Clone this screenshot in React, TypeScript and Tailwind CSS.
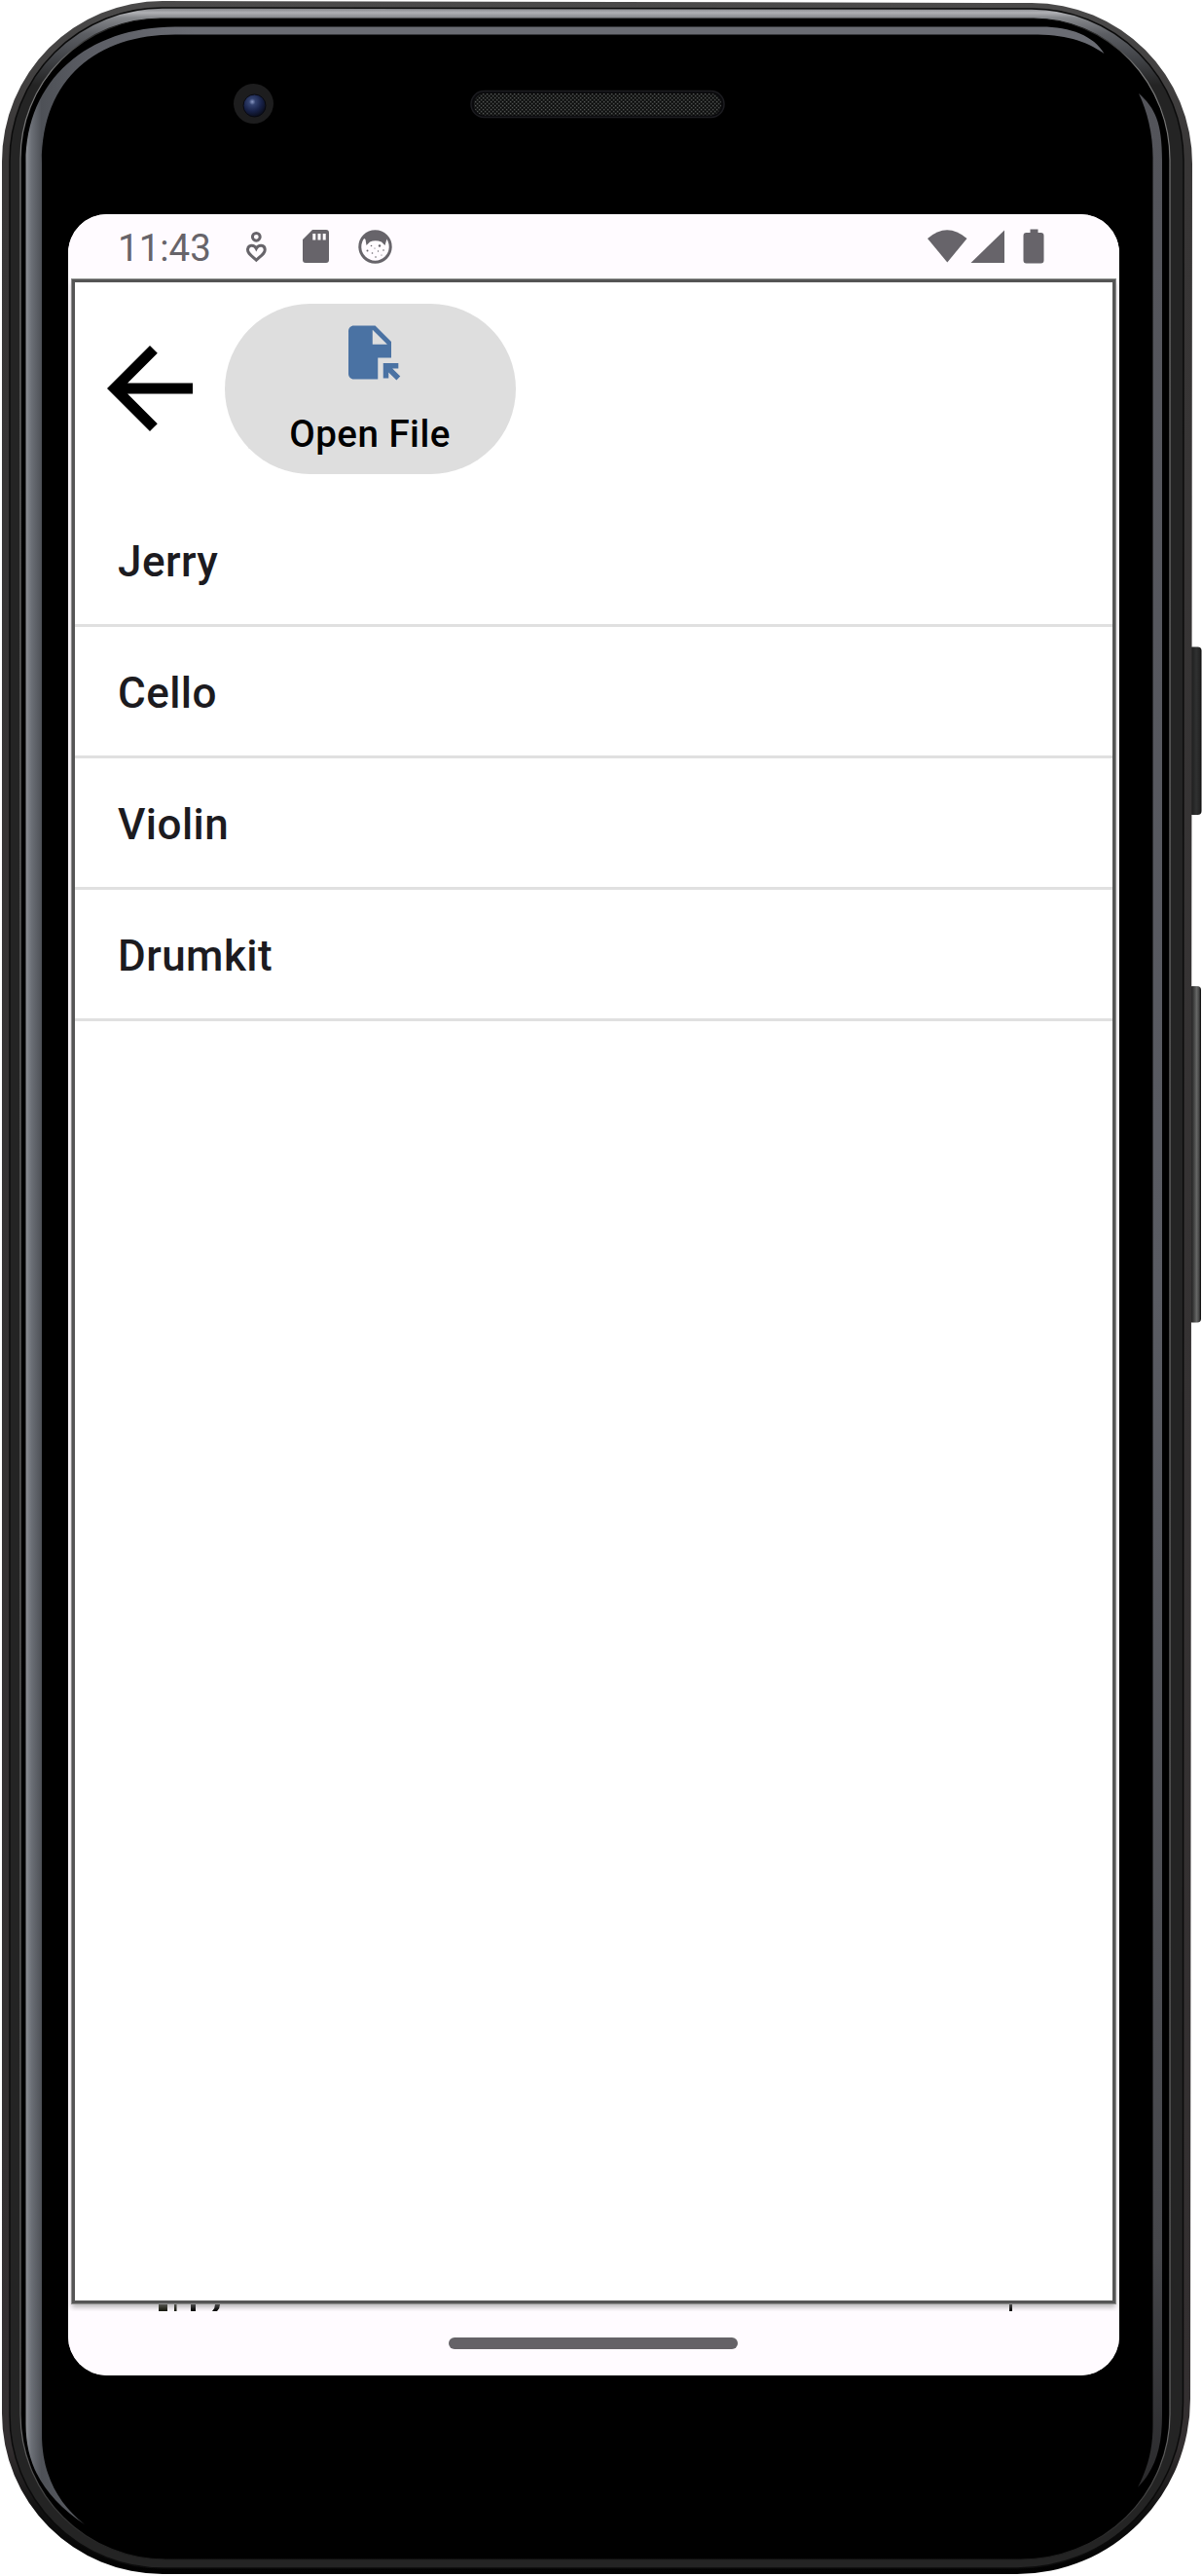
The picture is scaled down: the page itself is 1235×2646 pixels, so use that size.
const instruments = ["Jerry", "Cello", "Violin", "Drumkit"];

function Chassis() {
  return (
    <svg
      className="absolute inset-0 h-[2646px] w-[1235px]"
      viewBox="0 0 1235 2646"
      aria-hidden="true"
    >
      <defs>
        <linearGradient id="edge" gradientUnits="userSpaceOnUse" x1="0" y1="0" x2="0" y2="2646">
          <stop offset="0" stopColor="#4b4a4a" />
          <stop offset="0.06" stopColor="#383636" />
          <stop offset="0.95" stopColor="#332f30" />
          <stop offset="0.975" stopColor="#101010" />
          <stop offset="1" stopColor="#000" />
        </linearGradient>
        <linearGradient id="shine" gradientUnits="userSpaceOnUse" x1="0" y1="9" x2="0" y2="140">
          <stop offset="0" stopColor="#85868a" />
          <stop offset="0.03" stopColor="#b0b1b5" />
          <stop offset="0.07" stopColor="#85878b" />
          <stop offset="0.2" stopColor="#5c5e63" />
          <stop offset="0.4" stopColor="#404246" />
          <stop offset="0.6" stopColor="#242424" />
          <stop offset="1" stopColor="#242424" />
        </linearGradient>
        <linearGradient id="line" gradientUnits="userSpaceOnUse" x1="0" y1="20" x2="0" y2="2630">
          <stop offset="0" stopColor="#111" />
          <stop offset="0.02" stopColor="#777" />
          <stop offset="0.95" stopColor="#666" />
          <stop offset="1" stopColor="#1c1c1c" />
        </linearGradient>
        <linearGradient id="rim" gradientUnits="userSpaceOnUse" x1="26" y1="0" x2="200" y2="0">
          <stop offset="0" stopColor="#909398" />
          <stop offset="0.035" stopColor="#6c7077" />
          <stop offset="0.095" stopColor="#4e5157" />
          <stop offset="0.4" stopColor="#5c5e65" />
          <stop offset="1" stopColor="#6a6c73" />
        </linearGradient>
        <linearGradient id="rimRight" gradientUnits="userSpaceOnUse" x1="0" y1="96" x2="0" y2="2555">
          <stop offset="0" stopColor="#53545a" />
          <stop offset="0.5" stopColor="#5a5c63" />
          <stop offset="0.9" stopColor="#46474b" />
          <stop offset="1" stopColor="#2a2a2c" />
        </linearGradient>
        <linearGradient id="key" x1="0" x2="1" y1="0" y2="0">
          <stop offset="0" stopColor="#111" />
          <stop offset="0.6" stopColor="#303131" />
          <stop offset="0.85" stopColor="#252525" />
          <stop offset="1" stopColor="#060606" />
        </linearGradient>
        <linearGradient id="keyLong" x1="0" x2="1" y1="0" y2="0">
          <stop offset="0" stopColor="#0a0a0a" />
          <stop offset="0.35" stopColor="#333" />
          <stop offset="0.65" stopColor="#666766" />
          <stop offset="0.85" stopColor="#444" />
          <stop offset="1" stopColor="#050505" />
        </linearGradient>
        <radialGradient id="lens" cx="0.4" cy="0.33" r="0.65">
          <stop offset="0" stopColor="#8b99c4" />
          <stop offset="0.22" stopColor="#33426f" />
          <stop offset="0.65" stopColor="#172147" />
          <stop offset="1" stopColor="#0b0f20" />
        </radialGradient>
        <pattern id="mesh" width="4" height="4" patternUnits="userSpaceOnUse">
          <rect width="4" height="4" fill="#1a1c1b" />
          <rect width="1.2" height="1.2" fill="#545655" />
          <rect x="2" y="2" width="1.2" height="1.2" fill="#4c4e4d" />
          <rect x="2" width="1.2" height="1.2" fill="#080808" />
          <rect y="2" width="1.2" height="1.2" fill="#080808" />
        </pattern>
      </defs>

      <rect x="1221" y="664.5" width="13.5" height="172.500" rx="4" fill="url(#key)" />
      <rect x="1221" y="1013" width="13" height="345.500" rx="4" fill="url(#keyLong)" />

      <path
        d="M167 1 L1060 3 A165 165 0 0 1 1225 168 L1223 2464 A178 180 0 0 1 1045 2644 H167 A165 165 0 0 1 2 2479 V166 A165 165 0 0 1 167 1Z"
        fill="url(#edge)"
      />
      <path
        d="M167 8 L1060 9 A156 156 0 0 1 1216 165 L1215.500 2468 A170 170 0 0 1 1045.500 2638 H167 A157 157 0 0 1 10 2481 V165 A157 157 0 0 1 167 8Z"
        fill="url(#shine)"
        stroke="#0b0b0b"
        strokeWidth="1.5"
      />
      <path
        d="M165 19 H1062 A140 145 0 0 1 1202 164 V2480 A153 149 0 0 1 1049 2629 H170 A149 149 0 0 1 21 2480 V163 A144 144 0 0 1 165 19Z"
        fill="#000"
        stroke="url(#line)"
        strokeWidth="1.2"
      />
      <path
        d="M87 2593 C48 2567 26.500 2535 26.500 2490 V167 C26.500 82 90 27.500 180 27.500 H1070 C1100 27.500 1124 37 1134.500 55 C1114 41 1094 35.500 1060 35.500 H180 C100 35.500 43 80 43 167 V2500 C43 2542 60 2572 87 2593Z"
        fill="url(#rim)"
      />
      <path
        d="M1170 96 C1187 111 1194 126 1194 165 V2480 C1194 2515 1187 2536 1169 2555 C1180 2533 1184.500 2515 1184.500 2490 V165 C1185 139 1179 115 1170 96Z"
        fill="url(#rimRight)"
      />

      <circle cx="260.500" cy="106.500" r="20.500" fill="#1d1d1e" />
      <circle cx="261.500" cy="108.500" r="11.500" fill="url(#lens)" stroke="#080910" strokeWidth="1" />
      <rect x="484" y="93.500" width="260" height="27" rx="13.500" fill="#0a0a0c" stroke="#1c1c20" strokeWidth="1.500" />
      <rect x="487" y="96" width="254" height="22.500" rx="11" fill="url(#mesh)" />
    </svg>
  );
}

function StatusBar() {
  return (
    <div className="flex h-[66px] shrink-0 items-center bg-[#fffbff] pr-[77px] pl-[51px] text-[#67646a]">
      <span className="w-[94px] pt-[4px] text-[38.5px] leading-none whitespace-nowrap">11:43</span>
      <svg className="ml-[36px] h-[36px] w-[25px]" viewBox="0 0 25 36" fill="none" stroke="currentColor" strokeWidth="3">
        <circle cx="12.300" cy="8.300" r="3.900" />
        <path d="M12.300 20.300 C10 16 3.500 16.300 3.500 21.700 C3.500 25 6.500 27 12.300 32.200 C18.100 27 21.200 25 21.200 21.700 C21.200 16.300 14.700 16 12.300 20.300Z" />
      </svg>
      <svg className="ml-[35px] h-[36px] w-[27px]" viewBox="0 0 27 36">
        <path
          fill="currentColor"
          fillRule="evenodd"
          d="M10 1H24Q27 1 27 4V32Q27 35 24 35H3Q0 35 0 32V11ZM10.300 5V11.500H13.300V5ZM15.500 5V11.500H18.500V5ZM20.700 5V11.500H23.700V5Z"
        />
      </svg>
      <svg className="ml-[30px] h-[36px] w-[36px]" viewBox="0 0 36 36">
        <circle cx="17.500" cy="18.500" r="15.700" fill="#fffbff" stroke="currentColor" strokeWidth="3" />
        <path d="M5 9Q17 -3 30 9L29 12L27.500 17L24 13.500Q17.500 11 12 13.500L8.500 17L7.500 11Z" fill="currentColor" />
        <g fill="currentColor">
          <circle cx="9.500" cy="22.500" r="1" />
          <circle cx="13.500" cy="17.500" r=".8" />
          <circle cx="22" cy="17.500" r="1.200" />
          <circle cx="17" cy="20" r=".6" />
          <circle cx="14.500" cy="25" r=".8" />
          <circle cx="20.500" cy="23" r=".7" />
          <circle cx="26" cy="22" r=".8" />
          <circle cx="18" cy="29" r=".8" />
          <circle cx="24" cy="27" r=".6" />
        </g>
      </svg>
      <svg className="ml-auto h-[36px] w-[120px]" viewBox="0 0 120 36" fill="currentColor">
        <path d="M0 10Q20 -7.500 40.500 10L20.300 34.500Z" />
        <path d="M79 1.500V35H44.500Z" />
        <path d="M105.500 0.500h8V4h3q3 0 3 3V32.500q0 3-3 3h-15q-3 0-3-3V7q0-3 3-3h4Z" />
      </svg>
    </div>
  );
}

export default function App() {
  return (
    <main className="relative h-[2646px] w-[1235px] overflow-hidden bg-white font-['Roboto',sans-serif]">
      <Chassis />
      <div className="relative pt-[220px] pl-[70px]">
        <section className="flex h-[2220px] w-[1080px] flex-col overflow-hidden rounded-[40px] bg-[#fffbff]">
          <StatusBar />
          <div className="relative h-[2088px] shrink-0 overflow-hidden bg-[#fffbff] px-[7px] pt-[4px]">
            <svg className="absolute bottom-0 left-0 h-[12px] w-[1080px]" viewBox="0 0 1080 12" aria-hidden="true">
              <path d="M93 0h9v12h-9z M109 0h2.500v12h-2.500z" fill="#16170c" />
              <path d="M126 0h5v12H126z M967 0h3v12h-3z M151 0h5v5q0 4-3 7h-5q3-3 3-7z" fill="#000" />
            </svg>
            <div className="relative h-[2073px] bg-white shadow-[0_0_0_3px_#555,0_0_0_4px_#8e8e8e,0_1px_0_3px_#555,0_4px_5px_3px_#8889]">
              <header className="flex items-center pt-[22px] pb-[22px] pl-[11px]">
                <button className="mr-[11px] -mt-px" aria-label="Back">
                  <svg className="size-[132px]" viewBox="0 0 24 24">
                    <path d="M20 11H7.830l5.590-5.590L12 4l-8 8 8 8 1.410-1.410L7.830 13H20v-2z" />
                  </svg>
                </button>
                <button className="flex h-[175px] w-[299px] flex-col items-center rounded-full bg-[#dedede] pt-[16.500px] pr-px text-black">
                  <svg className="size-[66px]" viewBox="0 0 24 24" fill="#4a72a3">
                    <path d="M14 2H6c-1.100 0-1.990.9-1.990 2L4 20c0 1.100.89 2 1.990 2H15v-8h5V8l-6-6zm-1 7V3.500L18.500 9H13zm4 12.660V16h5.660v2h-2.240l2.950 2.950-1.410 1.410L19 19.410v2.240h-2z" />
                  </svg>
                  <span className="mt-[23px] text-[38.5px] leading-[55px] font-medium tracking-[0.5px]">Open File</span>
                </button>
              </header>
              <ul>
                {instruments.map((name) => (
                  <li
                    key={name}
                    className="flex h-[135px] items-center border-b-[3px] border-[#e0e0e0] pt-[4px] pl-[44px] text-[44px] leading-none font-medium tracking-[0.45px] text-[#1c1b1f]"
                  >
                    {name}
                  </li>
                ))}
              </ul>
            </div>
          </div>
          <div className="flex h-[66px] shrink-0 items-start justify-center bg-[#fffbff] pt-[27px] pr-px">
            <span className="h-[12px] w-[297px] rounded-full bg-[#656267]" />
          </div>
        </section>
      </div>
    </main>
  );
}
